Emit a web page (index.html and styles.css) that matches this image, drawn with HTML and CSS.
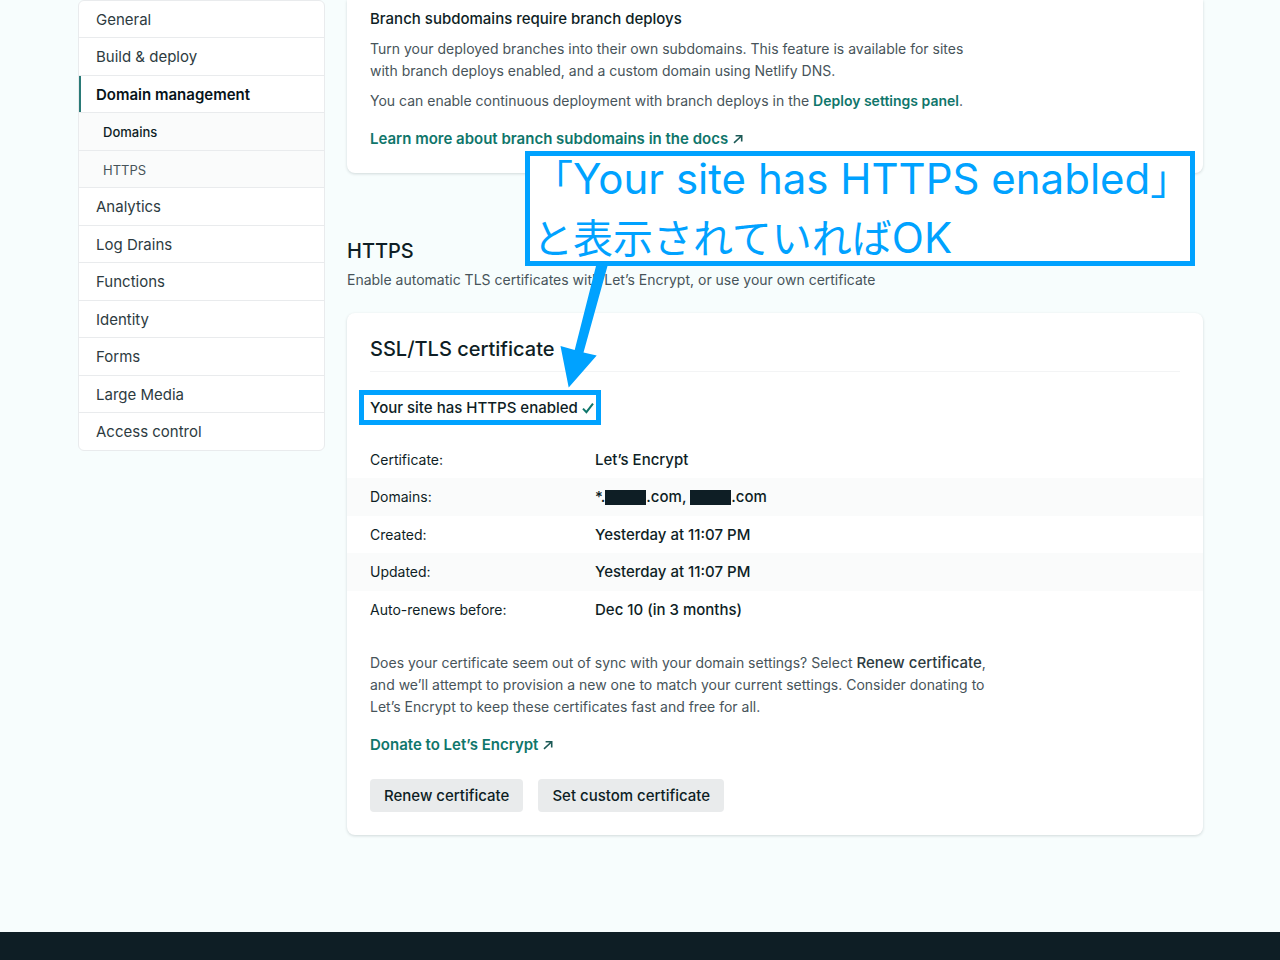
FILE: index.html
```html
<!DOCTYPE html>
<html lang="en">
<head>
<meta charset="utf-8">
<meta name="viewport" content="width=device-width, initial-scale=1">
<title>Domain management</title>
<link rel="stylesheet" href="styles.css">
</head>
<body>
<div class="layout">
  <nav class="sidebar" aria-label="Site settings">
    <ul class="nav-list">
      <li><a href="#">General</a></li>
      <li><a href="#">Build &amp; deploy</a></li>
      <li class="current"><a href="#">Domain management</a></li>
      <li class="sub sub-current"><a href="#">Domains</a></li>
      <li class="sub"><a href="#">HTTPS</a></li>
      <li><a href="#">Analytics</a></li>
      <li><a href="#">Log Drains</a></li>
      <li><a href="#">Functions</a></li>
      <li><a href="#">Identity</a></li>
      <li><a href="#">Forms</a></li>
      <li><a href="#">Large Media</a></li>
      <li><a href="#">Access control</a></li>
    </ul>
  </nav>

  <main class="content">
    <section class="card card-branch">
      <h3 class="card-subtitle">Branch subdomains require branch deploys</h3>
      <p class="copy">Turn your deployed branches into their own subdomains. This feature is available for sites<br>with branch deploys enabled, and a custom domain using Netlify DNS.</p>
      <p class="copy">You can enable continuous deployment with branch deploys in the <a class="link" href="#">Deploy settings panel</a>.</p>
      <a class="link doc-link" href="#">Learn more about branch subdomains in the docs
        <svg class="arrow-icon" viewBox="0 0 10 10" aria-hidden="true"><path d="M1 8.800 8.400 2M2.600 1.700H8.700V7.400"/></svg></a>
    </section>

    <header class="section-head">
      <h2 class="title">HTTPS</h2>
      <p class="section-copy">Enable automatic TLS certificates with Let’s Encrypt, or use your own certificate</p>
    </header>

    <section class="card">
      <h2 class="title card-title">SSL/TLS certificate</h2>
      <p class="status">Your site has HTTPS enabled
        <svg class="check-icon" viewBox="0 0 12 12" aria-hidden="true"><path d="M1 6.600 4.400 10.200 11 1.600"/></svg></p>
      <table class="details">
        <tbody>
          <tr><th scope="row">Certificate:</th><td>Let’s Encrypt</td></tr>
          <tr><th scope="row">Domains:</th><td>*.<span class="redacted"></span>.com, <span class="redacted"></span>.com</td></tr>
          <tr><th scope="row">Created:</th><td>Yesterday at 11:07 PM</td></tr>
          <tr><th scope="row">Updated:</th><td>Yesterday at 11:07 PM</td></tr>
          <tr><th scope="row">Auto-renews before:</th><td>Dec 10 (in 3 months)</td></tr>
        </tbody>
      </table>
      <p class="copy renew-copy">Does your certificate seem out of sync with your domain settings? Select <strong>Renew certificate</strong>,<br>and we’ll attempt to provision a new one to match your current settings. Consider donating to<br>Let’s Encrypt to keep these certificates fast and free for all.</p>
      <a class="link doc-link" href="#">Donate to Let’s Encrypt
        <svg class="arrow-icon" viewBox="0 0 10 10" aria-hidden="true"><path d="M1 8.800 8.400 2M2.600 1.700H8.700V7.400"/></svg></a>
      <div class="actions">
        <button class="button" type="button">Renew certificate</button>
        <button class="button" type="button">Set custom certificate</button>
      </div>
    </section>

    <aside class="callout" lang="ja">
      <p class="callout-text">「<span class="latin">Your site has HTTPS enabled</span>」<br>と表示されていれば<span class="latin">OK</span></p>
      <svg class="pointer" viewBox="0 0 48 122" aria-hidden="true"><path d="M36 0 14.700 84 .500 80 8.700 121.500 36.700 89.500 23.500 86.500 47.500 0Z"/></svg>
    </aside>
  </main>
</div>
<footer class="footer"></footer>
</body>
</html>
```
FILE: styles.css
```css
* { box-sizing: border-box; }

body {
  margin: 0;
  min-height: 100vh;
  display: flex;
  flex-direction: column;
  background: #f7fdfd;
  color: #0e1e25;
  font: 400 15px/22px Inter, "Noto Sans", sans-serif;
}

h2, h3, p, ul { margin: 0; }

.layout {
  display: grid;
  grid-template-columns: 247px minmax(0, 1fr);
  gap: 22px;
  align-items: start;
  padding: 0 77px 0 78px;
}

.nav-list {
  list-style: none;
  padding: 0;
  background: #fff;
  border: 1px solid #e9ebed;
  border-radius: 6px;
  overflow: hidden;
}
.nav-list li + li { border-top: 1px solid #e9ebed; }
.nav-list a {
  display: block;
  padding: 8px 17px 6px;
  color: #2d3b41;
  text-decoration: none;
}
.nav-list li:nth-child(even) a { padding-bottom: 7px; }
.nav-list .current a {
  padding-left: 15px;
  border-left: 2px solid #2a7a77;
  color: #06141a;
  font-weight: 600;
}
.nav-list .sub { background: #fafbfb; }
.nav-list .sub a {
  padding-left: 24px;
  color: #47545a;
  font-size: 13px;
}
.nav-list .sub-current a {
  color: #0e1e25;
  font-weight: 500;
}

.content { position: relative; }

.card {
  padding: 22px 23px 23px;
  background: #fff;
  border-radius: 8px;
  box-shadow: 0 1px 3px rgba(14, 30, 37, 0.16);
}
.card-branch {
  padding-top: 8px;
  border-top-left-radius: 0;
  border-top-right-radius: 0;
}
.card-subtitle {
  font-size: 15px;
  font-weight: 500;
  line-height: 22px;
}

.copy {
  max-width: 640px;
  margin-top: 8px;
  color: #47545a;
  font-size: 14px;
}
.copy strong {
  color: #2d3b41;
  font-size: 15px;
  font-weight: 500;
}
.link {
  color: #0f766b;
  font-weight: 600;
  text-decoration: none;
}
.doc-link {
  display: block;
  margin-top: 16px;
}
.arrow-icon {
  width: 10px;
  height: 10px;
  margin-left: 1px;
  fill: none;
  stroke: #1d5a57;
  stroke-width: 1.6;
}

.section-head { padding: 64px 0 22px; }
.title {
  font-size: 20px;
  font-weight: 500;
  line-height: 28px;
}
.section-copy {
  margin-top: 4px;
  color: #47545a;
  font-size: 14px;
}
.card-title {
  padding-bottom: 8px;
  border-bottom: 1px solid #f3f4f5;
}

.status {
  width: fit-content;
  margin: 18px -11px 16px;
  padding: 2px 2px 1px 6px;
  border: 5px solid #00a2ff;
  font-weight: 500;
}
.check-icon {
  width: 12px;
  height: 12px;
  vertical-align: -1px;
  fill: none;
  stroke: #0f766b;
  stroke-width: 2;
}

.details {
  width: calc(100% + 46px);
  margin: 0 -23px;
  border-collapse: collapse;
}
.details th, .details td {
  padding: 8px 0 7px;
  text-align: left;
  font-weight: 500;
}
.details th {
  width: 248px;
  padding-left: 23px;
  font-size: 14px;
  font-weight: 400;
}
.details tr:nth-child(even) { background: #fafbfb; }
.details tr:nth-child(even) > * { padding-bottom: 8px; }
.redacted {
  display: inline-block;
  width: 41px;
  height: 15px;
  vertical-align: -3px;
  background: #0e1e25;
}

.renew-copy { margin-top: 24px; }
.actions {
  display: flex;
  flex-wrap: wrap;
  gap: 15px;
  margin-top: 23px;
}
.button {
  padding: 6px 14px 5px;
  border: 0;
  border-radius: 4px;
  background: #e9ebec;
  color: #0e1e25;
  font: inherit;
  font-weight: 500;
}

.callout {
  position: absolute;
  top: 151px;
  left: 178px;
  padding: 0 0 0 3px;
  border: 5px solid #00a2ff;
  background: #fff;
  color: #00a2ff;
  font: 400 40px/58px Inter, "Noto Sans CJK JP", sans-serif;
  white-space: nowrap;
}
.callout-text { margin: -6px 0 -7px; }
.latin { font-size: 42px; }
.pointer {
  position: absolute;
  top: 110px;
  left: 30px;
  width: 48px;
  height: 122px;
  fill: #00a2ff;
}

.footer {
  flex: 1 0 28px;
  margin-top: 97px;
  background: #0e1e25;
}
```
